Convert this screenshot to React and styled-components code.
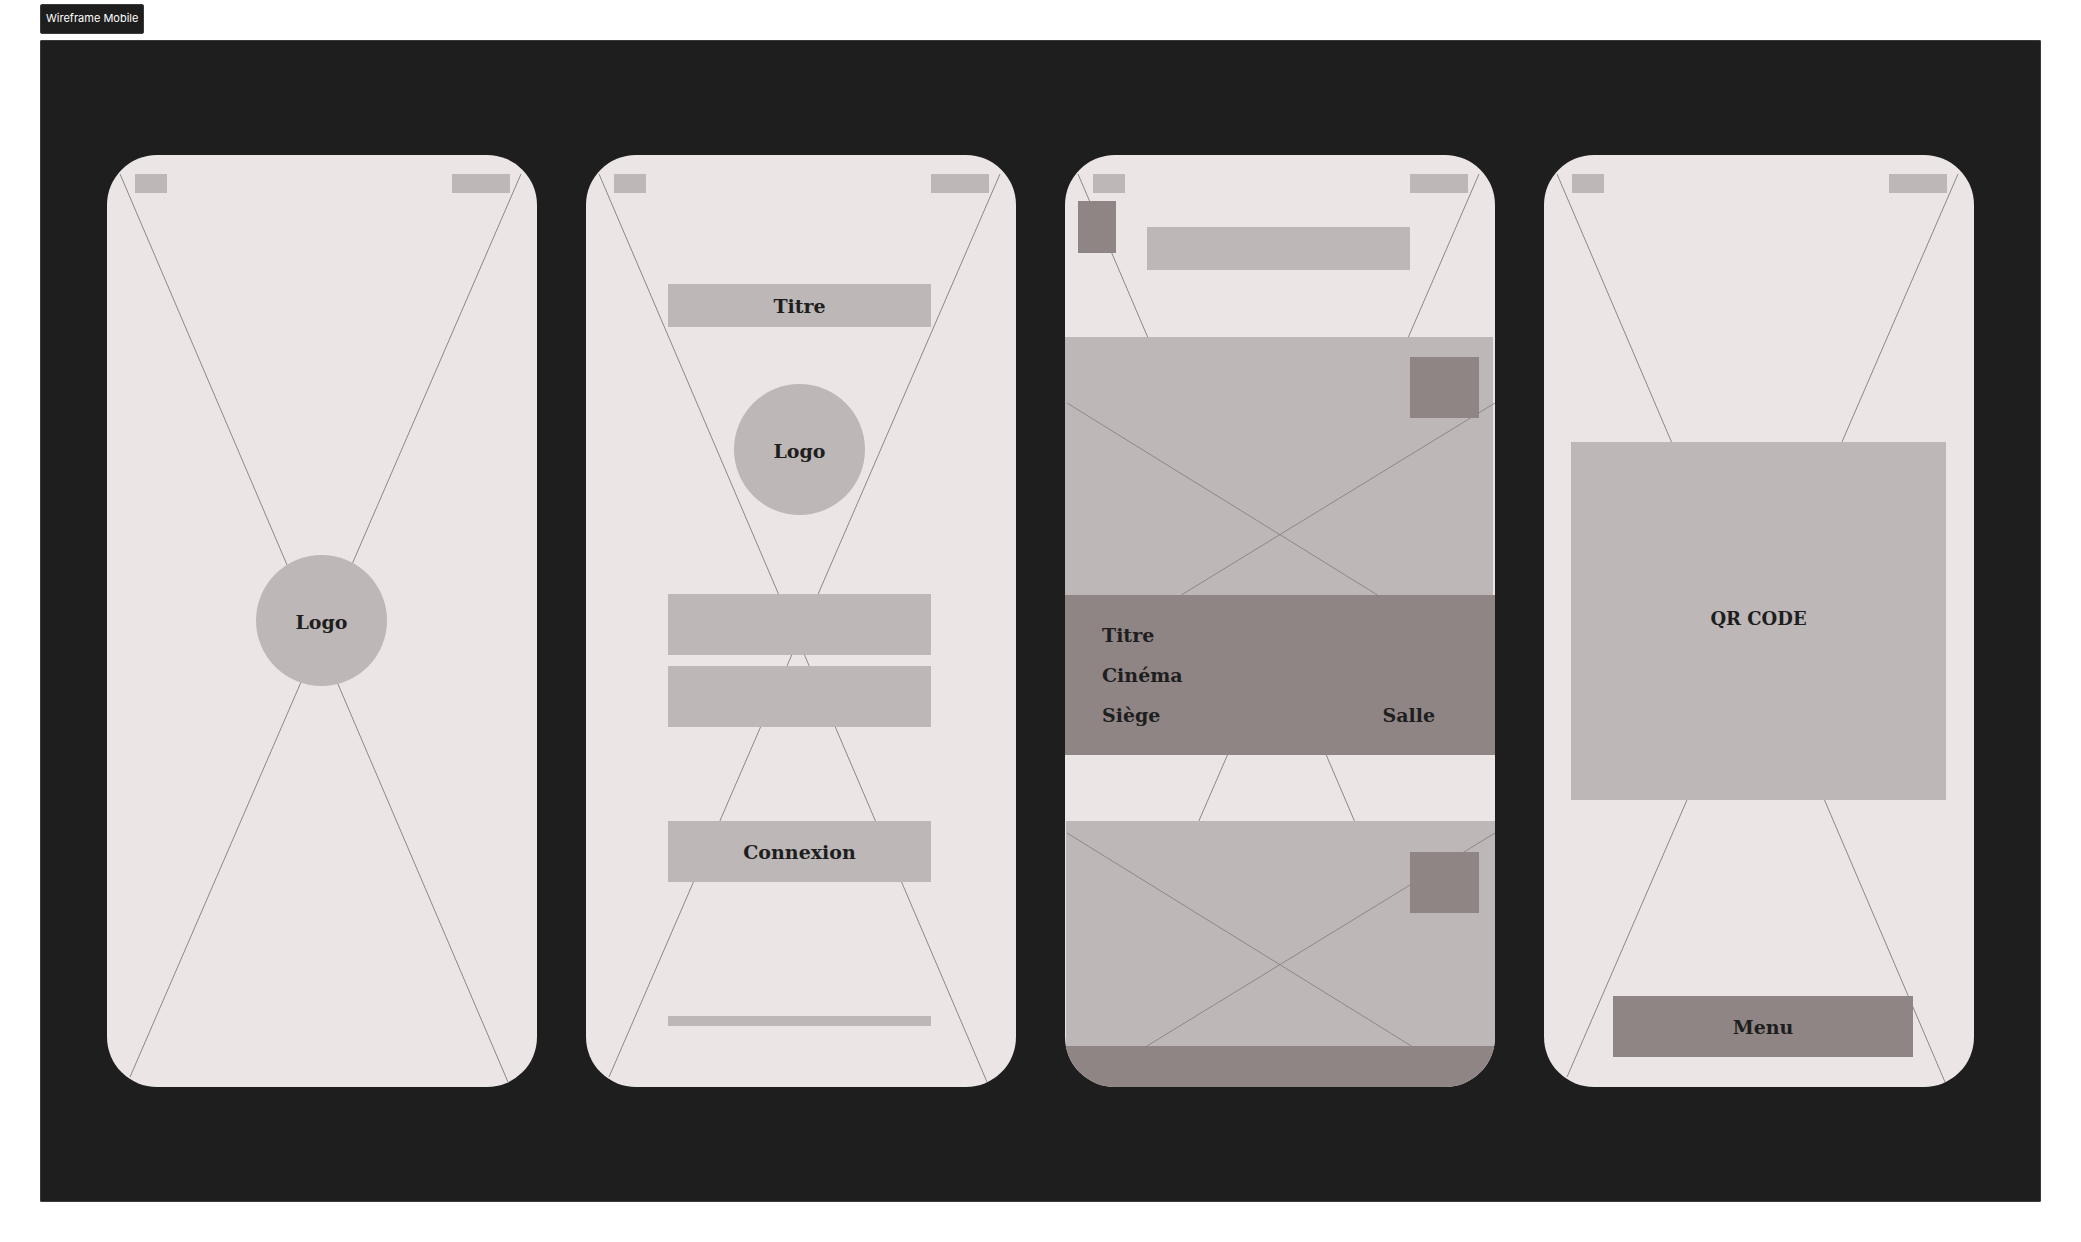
import React from "react";
import styled, { createGlobalStyle } from "styled-components";

const ink = "#1e1e1e";
const paper = "#ebe5e5";
const light = "#bdb7b7";
const dark = "#8f8585";
const stroke = "#8d8888";

const GlobalStyle = createGlobalStyle`
  *, *::before, *::after { box-sizing: border-box; }
  body {
    margin: 0;
    background: #fff;
    color: ${ink};
    font-family: "DejaVu Serif", serif;
  }
`;

const Page = styled.main`
  padding: 4px 40px 40px;
`;

const SectionTag = styled.h1`
  width: fit-content;
  height: 30px;
  margin: 0 0 6px;
  padding: 0 6px;
  border-radius: 3px;
  background: ${ink};
  box-shadow: inset 0 0 0 1px #3a3a3a;
  color: #fff;
  font: 400 11px/28px Inter, sans-serif;
`;

const Board = styled.section`
  display: grid;
  grid-template-columns: repeat(4, minmax(0, 1fr));
  gap: 49px;
  padding: 115px 67px;
  border-radius: 2px;
  background: ${ink};
  box-shadow: inset 0 0 0 1px #3a3a3a;
`;

const PhoneFrame = styled.article`
  position: relative;
  isolation: isolate;
  display: flex;
  flex-direction: column;
  min-height: 932px;
  overflow: hidden;
  border-radius: 50px;
  background: ${paper};
`;

const CrossLines = styled.svg`
  position: absolute;
  inset: 0;
  z-index: -1;
  width: 100%;
  height: 100%;
  stroke: ${stroke};
  stroke-width: 1;

  line { vector-effect: non-scaling-stroke; }
`;

const StatusBar = styled.header`
  display: flex;
  justify-content: space-between;
  padding: 19px 27px 0 28px;
`;

const StatusChip = styled.span`
  width: ${(p) => (p.$wide ? 58 : 32)}px;
  height: 19px;
  background: ${light};
`;

const Splash = styled.div`
  flex: 1;
  display: flex;
  align-items: center;
  justify-content: center;
  padding: 0 1px 39px 0;
`;

const Logo = styled.div`
  display: flex;
  align-items: center;
  justify-content: center;
  align-self: center;
  width: 131px;
  height: 131px;
  padding-top: 2px;
  border-radius: 50%;
  background: ${light};
  font-size: 19px;
  font-weight: 700;
`;

const LoginForm = styled.form`
  display: flex;
  flex-direction: column;
  padding: 91px 85px 61px 82px;
`;

const Banner = styled.h2`
  display: flex;
  align-items: center;
  justify-content: center;
  height: 43px;
  margin: 0;
  background: ${light};
  font-size: 19px;
  line-height: 24px;
`;

const LoginBanner = styled(Banner)`
  margin-bottom: 57px;
`;

const Fields = styled.div`
  display: flex;
  flex-direction: column;
  gap: 11px;
  padding: 79px 0 94px;
`;

const Field = styled.input`
  width: 100%;
  height: 61px;
  padding: 0 16px;
  border: 0;
  border-radius: 0;
  background: ${light};
  color: ${ink};
  font: 700 19px/24px "DejaVu Serif", serif;
`;

const Action = styled.button`
  height: 61px;
  padding: 0;
  border: 0;
  background: ${(p) => (p.$dark ? dark : light)};
  color: ${ink};
  font: 700 19px/24px "DejaVu Serif", serif;
  cursor: pointer;
`;

const FootLine = styled.div`
  height: 10px;
  margin-top: 134px;
  background: ${light};
`;

const ListHeader = styled.div`
  display: flex;
  align-items: flex-start;
  gap: 31px;
  height: 144px;
  padding: 8px 85px 0 13px;
`;

const MenuButton = styled.button`
  flex: none;
  width: 38px;
  height: 52px;
  padding: 0;
  border: 0;
  background: ${dark};
  cursor: pointer;
`;

const ListBanner = styled(Banner)`
  flex: 1;
  margin-top: 26px;
`;

const Poster = styled.div`
  position: relative;
  isolation: isolate;
  display: flex;
  justify-content: flex-end;
  height: ${(p) => p.$height}px;
  padding: ${(p) => p.$top}px 16px 0;

  &::before {
    content: "";
    position: absolute;
    inset: ${(p) => p.$bleed};
    z-index: -1;
    background: ${light};
  }
`;

const PosterBadge = styled.div`
  width: 69px;
  height: 61px;
  background: ${dark};
`;

const TicketInfo = styled.div`
  margin-bottom: 66px;
  padding: 20px 60px 20px 37px;
  background: ${dark};
`;

const InfoRow = styled.div`
  display: flex;
  justify-content: space-between;
  font-size: 19px;
  font-weight: 700;
  line-height: 40px;
`;

const TabBar = styled.footer`
  height: 41px;
  background: ${dark};
`;

const QrBox = styled.div`
  display: flex;
  align-items: center;
  justify-content: center;
  height: 358px;
  margin: 249px 28px 196px 27px;
  padding-bottom: 6px;
  background: ${light};
  font-size: 18px;
  font-weight: 700;
`;

const MenuBar = styled.nav`
  display: flex;
  flex-direction: column;
  padding: 0 61px 30px 69px;
`;

function Phone({ label, children }) {
  return (
    <PhoneFrame aria-label={label}>
      <CrossLines viewBox="0 0 430 932" preserveAspectRatio="none" aria-hidden="true">
        <line x1="13" y1="19" x2="401" y2="927" />
        <line x1="414" y1="19" x2="23" y2="922" />
      </CrossLines>
      <StatusBar>
        <StatusChip />
        <StatusChip $wide />
      </StatusBar>
      {children}
    </PhoneFrame>
  );
}

function PosterCard({ height, top, bleed, start }) {
  const reach = height - start;
  return (
    <Poster $height={height} $top={top} $bleed={bleed}>
      <CrossLines viewBox={`0 0 430 ${height}`} preserveAspectRatio="none" aria-hidden="true">
        <line x1="2" y1={start} x2={2 + reach * 1.617} y2={height} />
        <line x1="430" y1={start} x2={430 - reach * 1.634} y2={height} />
      </CrossLines>
      <PosterBadge />
    </Poster>
  );
}

export default function App() {
  return (
    <>
      <GlobalStyle />
      <Page>
        <SectionTag>Wireframe Mobile</SectionTag>
        <Board>
          <Phone label="Logo">
            <Splash>
              <Logo>Logo</Logo>
            </Splash>
          </Phone>

          <Phone label="Connexion">
            <LoginForm onSubmit={(e) => e.preventDefault()}>
              <LoginBanner>Titre</LoginBanner>
              <Logo>Logo</Logo>
              <Fields>
                <Field type="text" aria-label="Identifiant" />
                <Field type="password" aria-label="Mot de passe" />
              </Fields>
              <Action type="submit">Connexion</Action>
              <FootLine />
            </LoginForm>
          </Phone>

          <Phone label="Titre">
            <ListHeader>
              <MenuButton type="button" aria-label="Menu" />
              <ListBanner as="div" />
            </ListHeader>
            <PosterCard height={258} top={20} bleed="0 2px 0 0" start={66} />
            <TicketInfo>
              <InfoRow>Titre</InfoRow>
              <InfoRow>Cinéma</InfoRow>
              <InfoRow>
                <span>Siège</span>
                <span>Salle</span>
              </InfoRow>
            </TicketInfo>
            <PosterCard height={225} top={31} bleed="0 0 0 1px" start={12} />
            <TabBar />
          </Phone>

          <Phone label="QR code">
            <QrBox>QR CODE</QrBox>
            <MenuBar>
              <Action type="button" $dark>Menu</Action>
            </MenuBar>
          </Phone>
        </Board>
      </Page>
    </>
  );
}
